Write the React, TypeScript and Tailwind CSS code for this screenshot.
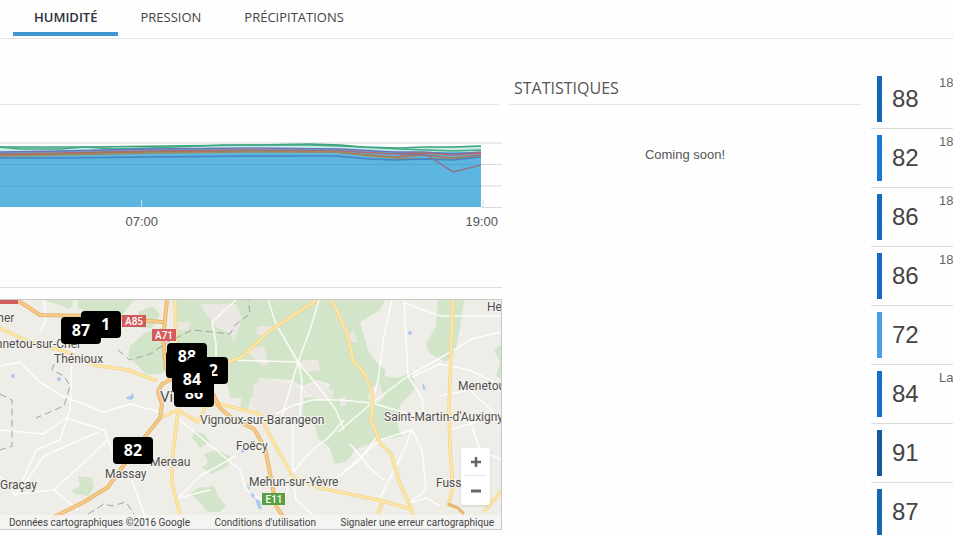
interface Station {
    id: number;
    value: number;
    color: string;
    label: string;
}

const tabs = ["Humidité", "Pression", "Précipitations"];

const stations: Station[] = [
    { id: 1, value: 88, color: "bg-[#1565b8]", label: "18000 Bourges" },
    { id: 2, value: 82, color: "bg-[#1878d8]", label: "18100 Vierzon" },
    { id: 3, value: 86, color: "bg-[#146ac0]", label: "18120 Massay" },
    { id: 4, value: 86, color: "bg-[#146ac4]", label: "18310 Graçay" },
    { id: 5, value: 72, color: "bg-[#4a9ee8]", label: "" },
    { id: 6, value: 84, color: "bg-[#1470cc]", label: "La Ferté" },
    { id: 7, value: 91, color: "bg-[#155a9c]", label: "" },
    { id: 8, value: 87, color: "bg-[#1766b2]", label: "" },
];

// later pins are stacked over the earlier ones
const pins = [
    { id: 1, value: 91, place: "left-[81px] top-[11px] text-center" },
    { id: 2, value: 87, place: "left-[61px] top-[17px] text-center" },
    { id: 3, value: 86, place: "left-[166px] top-[51px] text-center" },
    { id: 4, value: 88, place: "left-[167px] top-[43px] text-center" },
    { id: 5, value: 2, place: "left-[188px] top-[57px] pr-[10px] text-right" },
    { id: 6, value: 86, place: "left-[174px] top-[80px] text-center" },
    { id: 7, value: 84, place: "left-[172px] top-[66px] text-center" },
    { id: 8, value: 82, place: "left-[113px] top-[137px] text-center" },
];

const towns = [
    { name: "cher", x: -9, y: 22 },
    { name: "Mennetou-sur-Cher", x: -21, y: 48 },
    { name: "Thénioux", x: 54, y: 63 },
    { name: "Vierzon", x: 160, y: 102, big: true },
    { name: "Vignoux-sur-Barangeon", x: 200, y: 124 },
    { name: "Foëcy", x: 236, y: 150 },
    { name: "Mereau", x: 150, y: 166 },
    { name: "Massay", x: 105, y: 178 },
    { name: "Graçay", x: 0, y: 189 },
    { name: "Mehun-sur-Yèvre", x: 249, y: 186 },
    { name: "Fussy", x: 436, y: 187 },
    { name: "Saint-Martin-d'Auxigny", x: 384, y: 121 },
    { name: "Menetou-Salon", x: 458, y: 90 },
    { name: "Henrichemont", x: 487, y: 11 },
];

const forests = [
    "M78 0H134L126 10L118 22L104 32L88 12L78 8Z",
    "M44 0H74L70 9L56 4Z",
    "M176 0H362L386 -2L380 10L360 22L368 50L376 62L386 70L384 76L398 78L412 72L416 88L400 105L398 128L402 136L376 141L355 150L346 162L334 164L330 148L318 138L314 124L302 116L304 98L326 96L330 84L318 80L302 86L292 80L260 78L252 98L230 98L226 76L206 66L178 48L176 34Z",
    "M130 46L146 32L162 28L170 60L162 74L146 74L136 64L128 56Z",
    "M138 12L152 6L160 14L152 28L140 28Z",
    "M438 0H464L460 28L456 48L446 62L430 54L426 44L436 26Z",
    "M502 44L494 50L500 62L496 76L502 80Z",
    "M228 76L246 72L252 88L248 110L240 110L242 92L230 88Z",
    "M78 176L92 178L94 188L88 196L74 194L72 190L80 186Z",
    "M194 131L204 134L210 142L200 148L196 142L192 138Z",
    "M204 154L216 150L230 156L228 166L220 170L212 174L202 168L208 162Z",
    "M198 188L214 186L218 196L226 206L220 212L208 212L198 200L190 194Z",
];

const clearings = [
    "M200 4H236L242 18L238 30L234 42L228 32L214 26Z",
    "M256 34L258 26L270 26L274 30L262 36Z",
    "M246 50L264 46L268 64L262 66L254 58Z",
    "M346 34L354 32L358 42L350 42Z",
    "M296 62L306 60H318L320 70L306 72L298 66Z",
    "M254 84L264 78L292 84L304 92L302 116L262 120L252 106Z",
    "M304 88L318 82L334 92L332 100L316 100Z",
    "M370 88L380 83L384 98L376 104L368 100Z",
    "M340 98L346 96L346 106L340 106Z",
    "M177 22L190 22L188 30L178 30Z",
];

const smallRoads = [
    "M44 0L46 20L40 32M0 66L20 62L40 82L62 96L104 112L130 104L160 112",
    "M76 28L72 60L70 110L60 140L36 150L16 196L0 176",
    "M0 130L44 134L46 132L66 118L104 130L112 150M98 132L44 156L20 190",
    "M16 194L54 190L78 210M54 190L108 140M132 180L146 220",
    "M212 22L216 44L216 70M212 22L236 0",
    "M319 0L310 30L298 62L282 116M232 60L298 62L318 86L336 110L344 130",
    "M268 0L276 24L298 62L302 80L300 116M276 114L292 106L312 100L340 100L372 103",
    "M293 118L293 172L284 200M338 132L372 103L408 76L440 58L474 38L502 32",
    "M404 0L408 76L422 98L424 116M392 0L384 36L378 80L372 103L420 117",
    "M405 3L440 16L502 16M412 77L440 64L470 70L502 86M440 96L470 90L502 120",
    "M293 172L312 150L328 138L344 120M350 144L372 170L384 180M376 138L360 160L330 182",
    "M380 198L404 150L412 130L422 150L426 190M412 130L380 140L340 176",
    "M170 112L210 145L240 170L246 190L262 200M178 198L200 176L236 156M178 198L210 190",
    "M292 172L296 200L312 214M426 190L408 204L426 198L440 206",
    "M470 120L480 150L502 160M450 130L502 114",
];

const yellowRoads = [
    "M0 28L27 41L66 52L94 65L128 70L157 81",
    "M175 0L176 42L180 60",
    "M228 62L242 57L268 32L317 0",
    "M332 0L347 33L353 60L365 74L373 95L371 120L380 143L391 154L400 184L412 210L414 220",
    "M453 0L451 50L449 110L450 150L453 187L448 207",
    "M220 104L260 114L268 132L293 177L320 188L383 201L410 209",
    "M178 110L173 153L172 183L180 214",
    "M160 118L178 110L198 122L206 106L220 104",
    "M383 201L378 214M502 190L484 212",
];

const orangeRoads = [
    "M17 0L40 15L90 16L163 22",
    "M167 0L163 40L166 68L170 80L162 84L158 92L162 104L160 118L144 138L126 162L108 187L84 202L52 218",
    "M212 92L220 108L232 118L254 129L265 148L270 173L276 206L284 218",
];

const chartLines = [
    { color: "#3ba17c", points: "0,42 90,42 167,41 250,40 310,39 340,40 363,42 400,43 423,42 453,42 481,41" },
    { color: "#44a986", points: "0,42 20,44 60,44 85,42 115,44 150,43 225,40 310,40 340,41 400,44 453,46 481,45" },
    { color: "#6b74b8", points: "0,47 60,46 150,44 250,43 340,44 395,47 423,47 453,49 481,47" },
    { color: "#b06a72", points: "0,49 60,48 150,46 250,45 340,46 395,49 425,48 453,50 481,48" },
    { color: "#a5765e", points: "0,50 60,49 150,47 250,46 335,47 370,50 395,52 423,50 453,53 481,50" },
    { color: "#a08c5c", points: "0,51 60,50 150,48 250,47 335,47 370,51 395,53 423,54 453,54 481,52" },
    { color: "#4584c4", points: "0,53 60,53 150,52 250,51 335,51 370,54 395,55 423,54 453,55 481,52" },
    { color: "#8c7591", points: "400,50 425,49 453,67 481,60" },
];

function Tabs() {
    return (
        <nav className="flex h-[39px] gap-px border-b border-[#e3e3e3] pl-[13px] font-['Open_Sans',sans-serif] text-[13px] uppercase text-[#444]">
            {tabs.map((tab, index) => (
                <a
                    key={tab}
                    href="#"
                    className={`mb-[2px] flex items-center border-b-4 px-[21px] pt-[3px] ${
                        index === 0
                            ? "border-[#3f97d3] font-semibold text-[#2b2f3a]"
                            : "border-transparent"
                    }`}
                >
                    {tab}
                </a>
            ))}
        </nav>
    );
}

function HumidityChart() {
    return (
        <div>
            <svg
                viewBox="0 0 502 103"
                preserveAspectRatio="none"
                className="block h-[103px] w-full"
            >
                <path d="M0 42L60 43L167 41L310 39L400 43L481 41V102H0Z" fill="#c5ebe4" />
                <path d="M0 47L150 44L340 44L395 47L481 47V102H0Z" fill="#5cb6df" />
                <path d="M0 38H502M481 59.500H502M481 81H502M481 102.500H502" stroke="#d9d9d9" fill="none" />
                <path d="M0 59.500H481M0 81H481" stroke="#50a9d3" fill="none" />
                {chartLines.map((line) => (
                    <polyline
                        key={line.color}
                        points={line.points}
                        stroke={line.color}
                        strokeWidth="1.500"
                        fill="none"
                    />
                ))}
                <path d="M141.500 95V102M483 95V102" stroke="#c9dbe4" />
            </svg>
            <div className="flex justify-between pl-[25%] pr-1 pt-1 text-[13px] leading-5">
                <span>07:00</span>
                <span>19:00</span>
            </div>
        </div>
    );
}

function MapDrawing() {
    return (
        <svg
            viewBox="0 0 502 229"
            preserveAspectRatio="xMinYMin slice"
            className="absolute inset-0 h-full w-full"
        >
            <rect width="502" height="229" fill="#efede8" />
            <g fill="#d3e5c9">
                {forests.map((d) => (
                    <path key={d} d={d} />
                ))}
            </g>
            <g fill="#ebe8e3">
                {clearings.map((d) => (
                    <path key={d} d={d} />
                ))}
            </g>
            <g fill="none" strokeLinejoin="round">
                {smallRoads.map((d) => (
                    <path key={d} d={d} stroke="#fff" strokeWidth="1.500" strokeOpacity="0.850" />
                ))}
                {yellowRoads.map((d) => (
                    <path key={d} d={d} stroke="#f5d58a" strokeWidth="3.500" />
                ))}
                {yellowRoads.map((d) => (
                    <path key={d} d={d} stroke="#fce6a8" strokeWidth="2" />
                ))}
                {orangeRoads.map((d) => (
                    <path key={d} d={d} stroke="#eab56c" strokeWidth="4" />
                ))}
                {orangeRoads.map((d) => (
                    <path key={d} d={d} stroke="#f7cd8c" strokeWidth="2" />
                ))}
                <path d="M448 204L458 208L464 214" stroke="#eab56c" strokeWidth="3" />
                <path
                    d="M118 50L130 60L150 54L168 42L192 30L212 32L230 34L236 24L250 14L248 0M54 64L52 70L64 76L70 86L64 106L36 118M0 94L12 100L12 146L0 150M88 214L104 204L112 206L126 202L134 214"
                    stroke="#a3a3a0"
                    strokeDasharray="7 4"
                />
            </g>
            <g fill="#a9c8f2">
                <circle cx="59" cy="79" r="2" />
                <circle cx="13" cy="76" r="2" />
                <path d="M126 97L130 96L133 93L134 98L131 100L127 99Z" />
                <circle cx="410" cy="33" r="2" />
                <path d="M422 83L424 85L426 90L423 89Z" />
                <path d="M247 183L250 188L248 190ZM250 192L255 195L253 199ZM255 198L260 201L262 210L258 208ZM242 148L245 152L241 153Z" />
            </g>
            <g fill="#d25c5b">
                <rect x="0" width="18" height="4" />
                <rect x="122" y="15" width="24" height="12" />
                <rect x="152" y="29" width="24" height="12" />
            </g>
            <rect x="262" y="193" width="23" height="12" fill="#5aa042" />
            <g
                fill="#fff"
                textAnchor="middle"
                className="font-['Roboto',sans-serif] text-[10px] font-medium"
            >
                <text x="134" y="25">A85</text>
                <text x="164" y="39">A71</text>
                <text x="274" y="203">E11</text>
            </g>
            <g
                fill="#4f4f4f"
                stroke="#f5f3ee"
                strokeWidth="2"
                paintOrder="stroke"
                className="font-['Roboto',sans-serif]"
            >
                {towns.map((town) => (
                    <text
                        key={town.name}
                        x={town.x}
                        y={town.y}
                        className={town.big ? "text-[15px]" : "text-[12px]"}
                    >
                        {town.name}
                    </text>
                ))}
            </g>
        </svg>
    );
}

function StationMap() {
    return (
        <div className="relative h-[231px] overflow-hidden border-y border-r border-[#c9c9c9] font-['Roboto',sans-serif]">
            <MapDrawing />
            {pins.map((pin) => (
                <button
                    key={pin.id}
                    type="button"
                    className={`absolute h-[27px] w-[40px] rounded-[4px] bg-black font-['Noto_Sans',sans-serif] text-[16px] font-bold leading-[27px] text-white ${pin.place}`}
                >
                    {pin.value}
                </button>
            ))}
            <div className="absolute bottom-6 right-[11px] flex w-[29px] flex-col rounded-[2px] bg-white px-1 text-[#666] shadow">
                <button
                    type="button"
                    aria-label="Zoom avant"
                    className="flex h-[28px] items-center justify-center border-b border-[#e6e6e6]"
                >
                    <svg viewBox="0 0 12 12" className="h-3 w-3">
                        <path d="M6 1V11M1 6H11" stroke="currentColor" strokeWidth="2.500" />
                    </svg>
                </button>
                <button
                    type="button"
                    aria-label="Zoom arrière"
                    className="flex h-[29px] items-center justify-center"
                >
                    <svg viewBox="0 0 12 12" className="h-3 w-3">
                        <path d="M1 6H11" stroke="currentColor" strokeWidth="3" />
                    </svg>
                </button>
            </div>
            <div className="absolute inset-x-0 bottom-0 flex h-[14px] items-center justify-between whitespace-nowrap bg-[#f5f5f5]/80 pl-[9px] pr-[7px] text-[10px] text-[#444]">
                <span>Données cartographiques ©2016 Google</span>
                <a href="#">Conditions d'utilisation</a>
                <a href="#">Signaler une erreur cartographique</a>
            </div>
        </div>
    );
}

function StationList() {
    return (
        <ul className="overflow-hidden pt-[31px]">
            {stations.map((station) => (
                <li
                    key={station.id}
                    className="flex h-[59px] border-b border-[#dcdcdc] py-[6px] pl-[6px]"
                >
                    <span className={`w-[5px] shrink-0 ${station.color}`} />
                    <span className="flex w-[57px] shrink-0 items-center pl-[10px] text-[24px] text-[#444]">
                        {station.value}
                    </span>
                    <span className="whitespace-nowrap text-[13px] leading-[14px] text-[#666]">
                        {station.label}
                    </span>
                </li>
            ))}
        </ul>
    );
}

function App() {
    return (
        <div className="h-screen overflow-hidden bg-[#fefefe] font-['Liberation_Sans',sans-serif] text-[#555]">
            <Tabs />
            <main className="grid grid-cols-[502fr_369fr_82px]">
                <section className="min-w-0">
                    <div className="mr-[3px] h-[66px] border-b border-[#e6e6e6]" />
                    <HumidityChart />
                    <div className="mb-[11px] h-[56px] border-b border-[#dedede]" />
                    <StationMap />
                </section>
                <section className="min-w-0 pl-[7px] pr-[10px]">
                    <h2 className="flex h-[66px] items-end border-b border-[#e6e6e6] pb-1 pl-[5px] font-['Open_Sans',sans-serif] text-[16px] uppercase text-[#555]">
                        Statistiques
                    </h2>
                    <p className="pt-10 text-center text-[13px] leading-5">
                        Coming soon!
                    </p>
                </section>
                <StationList />
            </main>
        </div>
    );
}

export default App;
